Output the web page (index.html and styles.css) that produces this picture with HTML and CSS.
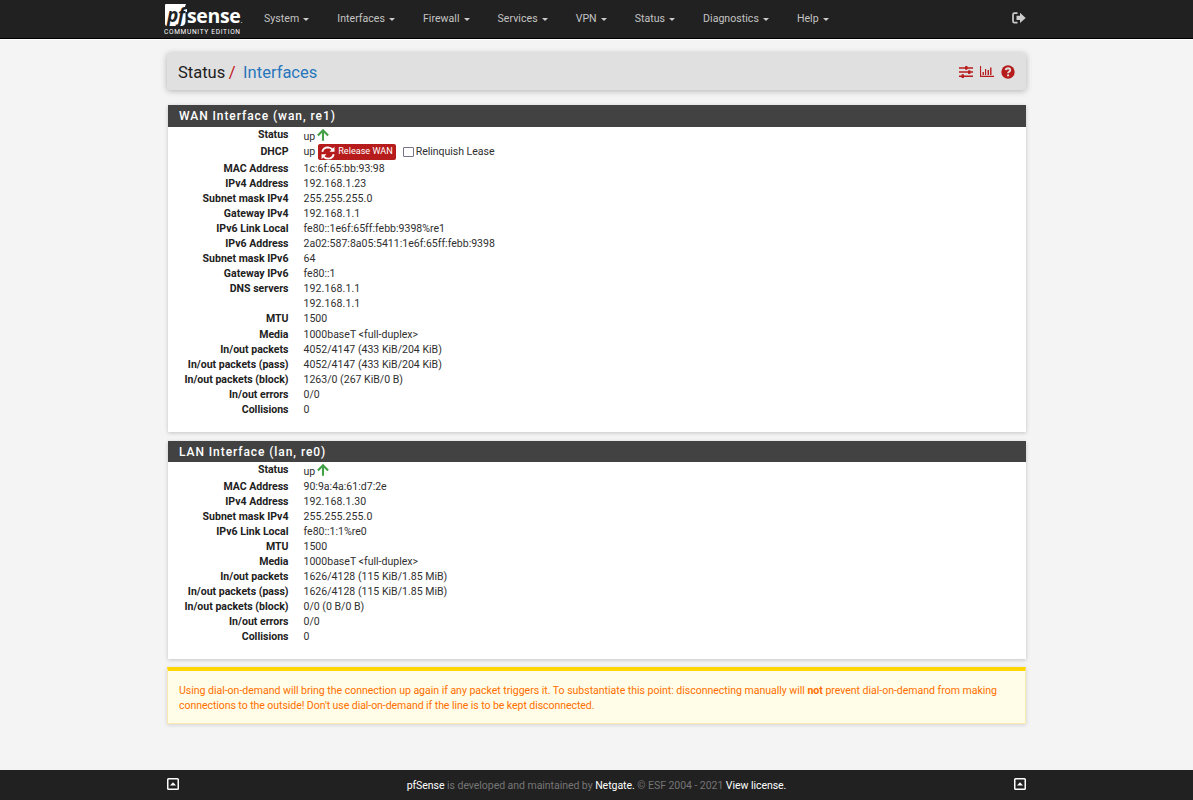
FILE: index.html
```html
<!DOCTYPE html>
<html lang="en">
<head>
<meta charset="utf-8">
<title>Status: Interfaces</title>
<link rel="stylesheet" href="styles.css">
</head>
<body>
<header class="topbar">
  <div class="brand">
    <div class="wordmark">
      <svg class="mark" width="23" height="22" viewBox="0 0 23 22"><path d="M2 0H22Q21 2 20.500 5H23V8H21.500V17Q21.500 22 17 22H3Q1 22 1 20V1Q1 0 2 0Z" fill="#fff"/></svg>
      <span class="pf">pf</span><span class="sense">sense</span><span class="dot">.</span>
    </div>
    <div class="edition">COMMUNITY EDITION</div>
  </div>
  <nav class="menu">
    <a>System</a><a>Interfaces</a><a>Firewall</a><a>Services</a><a>VPN</a><a>Status</a><a>Diagnostics</a><a>Help</a>
  </nav>
  <svg class="logout" width="14" height="12" viewBox="0 0 14 12"><path d="M5.500 1.200H2.500Q1 1.200 1 2.700V9.200Q1 10.700 2.500 10.700H5.500" fill="none" stroke="#ccc" stroke-width="1.700"/><path d="M4.500 3.700H8V.8L13.700 5.900L8 11V8.100H4.500Z" fill="#ccc"/></svg>
</header>

<main class="container">
  <div class="crumbs">
    <div class="trail"><span>Status</span><span class="slash">/</span><span class="current">Interfaces</span></div>
    <div class="tools">
      <svg width="14" height="12" viewBox="0 0 14 12" fill="#b71c1c"><path d="M0 1.200H14V2.700H0ZM0 5.300H14V6.800H0ZM0 9.400H14V10.900H0Z"/><rect x="6" y="0" width="2.500" height="3.700" rx=".6"/><rect x="9" y="4.200" width="2.500" height="3.700" rx=".6"/><rect x="2.500" y="8.300" width="2.500" height="3.700" rx=".6"/></svg>
      <svg width="14" height="12" viewBox="0 0 14 12" fill="#b71c1c"><path d="M0 0H1.100V9.800H14V11H0ZM2.500 6H3.900V9H2.500ZM5 3H6.200V9H5ZM7.600 4H9V9H7.600ZM10.100 1.500H11.500V9H10.100Z"/></svg>
      <svg width="14" height="14" viewBox="0 0 14 14"><circle cx="7" cy="7" r="6.700" fill="#b71c1c"/><path d="M4.700 5.100Q5 3.300 7.100 3.300Q9.300 3.400 9.200 5.200Q9.200 6.300 7.800 7Q7.100 7.400 7.100 8.300" fill="none" stroke="#e0e0e0" stroke-width="1.900"/><rect x="6.100" y="9.400" width="2" height="1.900" fill="#e0e0e0"/></svg>
    </div>
  </div>

  <section class="panel wan">
    <h2>WAN Interface (wan, re1)</h2>
    <dl>
      <dt class="status">Status</dt><dd class="status"><span>up</span><svg class="up" width="12" height="12" viewBox="0 0 12 12"><path d="M6 11.800V1.500M.9 6.500L6 1.300L11.100 6.500" fill="none" stroke="#43a047" stroke-width="2.100"/></svg></dd>
      <dt class="dhcp">DHCP</dt><dd class="dhcp"><span>up</span><span class="button"><svg width="14" height="14" viewBox="0 0 14 14"><path d="M1.300 5.800Q2.300 1.500 7 1.400Q9.800 1.500 11.600 3.700M12.700 8.200Q11.700 12.500 7 12.600Q4.200 12.500 2.400 10.300" fill="none" stroke="#fff" stroke-width="1.900"/><path d="M13.500 .8V5.800H8.500ZM.5 13.200V8.200H5.500Z" fill="#fff"/></svg>Release WAN</span><span class="check"></span><span class="lease">Relinquish Lease</span></dd>
      <dt>MAC Address</dt><dd>1c:6f:65:bb:93:98</dd>
      <dt>IPv4 Address</dt><dd class="num">192.168.1.23</dd>
      <dt>Subnet mask IPv4</dt><dd class="num">255.255.255.0</dd>
      <dt>Gateway IPv4</dt><dd class="num">192.168.1.1</dd>
      <dt>IPv6 Link Local</dt><dd>fe80::1e6f:65ff:febb:9398%re1</dd>
      <dt>IPv6 Address</dt><dd>2a02:587:8a05:5411:1e6f:65ff:febb:9398</dd>
      <dt>Subnet mask IPv6</dt><dd>64</dd>
      <dt>Gateway IPv6</dt><dd>fe80::1</dd>
      <dt>DNS servers</dt><dd class="num">192.168.1.1<br>192.168.1.1</dd>
      <dt>MTU</dt><dd>1500</dd>
      <dt>Media</dt><dd>1000baseT &lt;full-duplex&gt;</dd>
      <dt>In/out packets</dt><dd>4052/4147 (433 KiB/204 KiB)</dd>
      <dt>In/out packets (pass)</dt><dd>4052/4147 (433 KiB/204 KiB)</dd>
      <dt>In/out packets (block)</dt><dd>1263/0 (267 KiB/0 B)</dd>
      <dt>In/out errors</dt><dd>0/0</dd>
      <dt>Collisions</dt><dd>0</dd>
    </dl>
  </section>

  <section class="panel lan">
    <h2>LAN Interface (lan, re0)</h2>
    <dl>
      <dt class="status">Status</dt><dd class="status"><span>up</span><svg class="up" width="12" height="12" viewBox="0 0 12 12"><path d="M6 11.800V1.500M.9 6.500L6 1.300L11.100 6.500" fill="none" stroke="#43a047" stroke-width="2.100"/></svg></dd>
      <dt>MAC Address</dt><dd>90:9a:4a:61:d7:2e</dd>
      <dt>IPv4 Address</dt><dd class="num">192.168.1.30</dd>
      <dt>Subnet mask IPv4</dt><dd class="num">255.255.255.0</dd>
      <dt>IPv6 Link Local</dt><dd>fe80::1:1%re0</dd>
      <dt>MTU</dt><dd>1500</dd>
      <dt>Media</dt><dd>1000baseT &lt;full-duplex&gt;</dd>
      <dt>In/out packets</dt><dd>1626/4128 (115 KiB/1.85 MiB)</dd>
      <dt>In/out packets (pass)</dt><dd>1626/4128 (115 KiB/1.85 MiB)</dd>
      <dt>In/out packets (block)</dt><dd>0/0 (0 B/0 B)</dd>
      <dt>In/out errors</dt><dd>0/0</dd>
      <dt>Collisions</dt><dd>0</dd>
    </dl>
  </section>

  <div class="notice">Using dial-on-demand will bring the connection up again if any packet triggers it. To substantiate this point: disconnecting manually will <b>not</b> prevent dial-on-demand from making<br><span class="tail">connections to the outside! Don't use dial-on-demand if the line is to be kept disconnected.</span></div>
</main>

<footer class="footer">
  <svg width="12" height="12" viewBox="0 0 12 12"><rect x=".75" y=".75" width="10.500" height="10.500" rx=".8" fill="none" stroke="#fff" stroke-width="1.500"/><path d="M3 7.500L6 4.300L9 7.500Z" fill="#fff"/></svg>
  <p><a>pfSense</a> is developed and maintained by <a>Netgate.</a> © ESF 2004 - 2021 <a>View license.</a></p>
  <svg width="12" height="12" viewBox="0 0 12 12"><rect x=".75" y=".75" width="10.500" height="10.500" rx=".8" fill="none" stroke="#fff" stroke-width="1.500"/><path d="M3 7.500L6 4.300L9 7.500Z" fill="#fff"/></svg>
</footer>
</body>
</html>
```
FILE: styles.css
```css
* { box-sizing: border-box; }
body {
  margin: 0;
  height: 800px;
  display: flex;
  flex-direction: column;
  background: #f4f4f4;
  color: #212121;
  font: 10.55px/15.04px Roboto, sans-serif;
  overflow: hidden;
}
.topbar {
  height: 39px;
  flex: none;
  display: flex;
  align-items: flex-start;
  padding: 0 167px 0 164px;
  background: #212121;
  border-bottom: 1px solid #000;
  box-shadow: 0 1px 0 #fff;
}
.brand { width: 100px; padding-top: 4px; color: #fff; }
.wordmark { position: relative; display: flex; height: 22px; white-space: nowrap; }
.mark { flex: none; }
.pf {
  position: absolute; left: 3px; top: 0;
  color: #212121; font: italic bold 19px/22px "Open Sans", sans-serif; letter-spacing: -.5px;
}
.sense { font: bold 19.500px/23px "Open Sans", sans-serif; letter-spacing: -.35px; margin-left: 0; }
.dot { font-size: 8px; line-height: 34px; }
.edition { font-size: 6.6px; line-height: 9px; letter-spacing: .67px; margin-top: 2px; white-space: nowrap; }
.menu { display: flex; gap: 28px; padding-top: 11px; color: #c4c4c4; letter-spacing: .04px; }
.menu a { display: flex; align-items: center; gap: 4px; }
.menu a::after { content: ""; border: 3px solid transparent; border-top-color: #ccc; border-bottom: 0; margin-top: 1px; }
.logout { margin: 12px 0 0 auto; }

.container { width: 859px; margin-left: 167px; flex: 1; }
.crumbs {
  height: 37px;
  margin-top: 14px;
  padding: 1px 11px 0;
  display: flex;
  justify-content: space-between;
  align-items: center;
  background: #e0e0e0;
  border-radius: 3px;
  box-shadow: 0 1px 6px rgba(0, 0, 0, .28);
}
.trail { display: flex; font-size: 16.550px; line-height: 20px; padding-top: 1px; }
.slash { color: #c4161c; margin: 0 7.500px 0 3.500px; }
.current { color: #2876bd; }
.tools { display: flex; gap: 7px; align-items: center; }

.panel { margin-left: 1px; width: 857.500px; background: #fff; box-shadow: 0 1px 4px rgba(0, 0, 0, .2); }
.wan { height: 327px; margin-top: 15px; }
.lan { height: 218px; margin-top: 9px; }
.panel h2 {
  margin: 0;
  height: 21px;
  padding-left: 11px;
  background: #424242;
  color: #fff;
  font-size: 12px;
  font-weight: 500;
  line-height: 22px;
  letter-spacing: .93px;
}
.panel dl { margin: 0; display: grid; grid-template-columns: 120.500px 1fr; column-gap: 15px; }
.wan h2 { height: 22px; }
dt { text-align: right; font-weight: bold; }
dd { margin: 0; color: #303030; }
.num { letter-spacing: .1px; }
dt.status, dt.dhcp { height: 17px; }
dd.status, dd.dhcp { height: 17px; display: flex; align-items: center; }
dd.status span { padding-top: 2px; }
dd.dhcp { height: 16px; }
.up { margin: -2px 0 0 2px; }
dt.dhcp { line-height: 16px; }
.button {
  height: 16px;
  width: 78px;
  margin: 0 7px 0 3px;
  padding-left: 3px;
  display: flex;
  align-items: center;
  gap: 3px;
  background: #b71c1c;
  border-radius: 2px;
  color: #fff;
  font-size: 9.100px;
  white-space: nowrap;
}
.button svg { margin-top: 1px; }
.check { width: 10.500px; height: 10.500px; border: 1px solid #77738a; border-radius: 1px; margin-right: 2px; }
.lease { letter-spacing: -.04px; }

.notice {
  height: 57px;
  margin-top: 8px;
  padding: 12px 11px 0;
  background: #fffde7;
  border: 1px solid #faeab0;
  border-top: 4px solid #ffd600;
  color: #ff6f00;
  box-shadow: 0 1px 4px rgba(0, 0, 0, .15);
  white-space: nowrap;
  letter-spacing: -.029px;
}
.tail { letter-spacing: -.07px; }
.footer {
  height: 30px;
  flex: none;
  display: flex;
  justify-content: space-between;
  align-items: center;
  padding: 0 167px;
  background: #212121;
  color: #757575;
}
.footer svg { margin-bottom: 2px; }
.footer p { margin: 1px 0 0; letter-spacing: -.065px; }
.footer a { color: #fff; }
```
